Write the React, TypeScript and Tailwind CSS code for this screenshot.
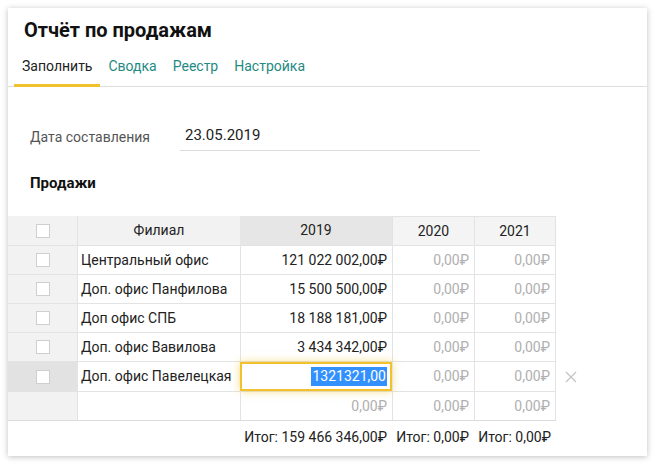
import React from 'react';

const rows = [
  { name: 'Центральный офис', v2019: '121 022 002,00₽' },
  { name: 'Доп. офис Панфилова', v2019: '15 500 500,00₽' },
  { name: 'Доп офис СПБ', v2019: '18 188 181,00₽' },
  { name: 'Доп. офис Вавилова', v2019: '3 434 342,00₽' },
];

const tabs = ['Заполнить', 'Сводка', 'Реестр', 'Настройка'];

const cols = 'grid grid-cols-[69px_163px_152px_82px_82px]';

const Checkbox = () => (
  <span className="block h-[14px] w-[14px] border border-[#cfcfcf] bg-white" />
);

const Zero = ({ last }: { last?: boolean }) => (
  <div
    className={`flex items-center justify-end border-l border-[#e3e3e3] pr-[5px] text-[#b0b0b0] ${
      last ? 'border-r' : ''
    }`}
  >
    0,00₽
  </div>
);

export default function App() {
  return (
    <div className="h-[468px] w-[656px] bg-white pt-2 pl-2 font-['Roboto',sans-serif]">
      <div className="h-[448px] w-[639px] bg-white shadow-[0_1px_6px_rgba(0,0,0,0.25)]">
        <div className="px-4 pt-[10px]">
          <h1 className="text-[20px] leading-6 font-bold text-[#111]">Отчёт по продажам</h1>
        </div>

        <div className="mt-[10px] flex border-b border-[#dedede] px-[6px]">
          {tabs.map((t, i) => (
            <div
              key={t}
              className={`-mb-px border-b-[3px] px-2 pt-[4px] pb-[8px] text-[14px] leading-5 ${
                i === 0 ? 'border-[#f2c12e] text-[#222]' : 'border-transparent text-[#1f8a83]'
              }`}
            >
              {t}
            </div>
          ))}
        </div>

        <div className="mt-[37px] flex items-center pl-[22px]">
          <span className="w-[150px] text-[14px] text-[#555]">Дата составления</span>
          <div className="w-[300px] border-b border-[#dcdcdc] pb-[3px] pl-[5px] text-[15px] text-[#222]">
            23.05.2019
          </div>
        </div>

        <div className="mt-[21px] pl-[22px] text-[15px] font-bold text-[#111]">Продажи</div>

        <div className="mt-[22px] flex items-start">
          <div className="w-[548px] text-[14px] text-[#222]">
            <div className={`${cols} h-[30px] border-b border-[#e3e3e3]`}>
              <div className="flex items-center justify-center bg-[#f2f2f2]">
                <Checkbox />
              </div>
              <div className="flex items-center justify-center border-l border-[#e3e3e3] bg-[#f2f2f2]">Филиал</div>
              <div className="flex items-center justify-center bg-[#e6e6e6]">2019</div>
              <div className="flex items-center justify-center border-t border-l border-[#e3e3e3] bg-[#f4f4f4]">2020</div>
              <div className="flex items-center justify-center border-t border-r border-l border-[#e3e3e3] bg-[#f4f4f4]">2021</div>
            </div>

            {rows.map((r) => (
              <div key={r.name} className={`${cols} h-[29px] border-b border-[#e3e3e3]`}>
                <div className="flex items-center justify-center bg-[#f2f2f2]">
                  <Checkbox />
                </div>
                <div className="flex items-center border-l border-[#e3e3e3] pl-[3px]">{r.name}</div>
                <div className="flex items-center justify-end border-l border-[#e3e3e3] pr-[5px]">{r.v2019}</div>
                <Zero />
                <Zero last />
              </div>
            ))}

            <div className={`${cols} h-[30px] border-b border-[#e3e3e3]`}>
              <div className="flex items-center justify-center bg-[#e2e2e2]">
                <Checkbox />
              </div>
              <div className="flex items-center border-l border-[#e3e3e3] pl-[3px]">Доп. офис Павелецкая</div>
              <div className="flex items-center justify-end border-2 border-[#f2c12e] pr-[3px] shadow-[0_0_8px_rgba(242,193,46,0.6)]">
                <span className="bg-[#3390ff] px-px leading-[19px] text-white">1321321,00</span>
              </div>
              <Zero />
              <Zero last />
            </div>

            <div className={`${cols} h-[29px] border-b border-[#dcdcdc]`}>
              <div className="bg-[#f2f2f2]" />
              <div className="border-l border-[#e3e3e3]" />
              <Zero />
              <Zero />
              <Zero last />
            </div>

            <div className={`${cols} h-[32px]`}>
              <div />
              <div />
              <div className="flex items-center justify-end pr-[5px]">Итог: 159 466 346,00₽</div>
              <div className="flex items-center justify-end pr-[5px]">Итог: 0,00₽</div>
              <div className="flex items-center justify-end pr-[5px]">Итог: 0,00₽</div>
            </div>
          </div>

          <div className="mt-[146px] ml-[9px] flex h-[30px] items-center">
            <svg width="12" height="12" viewBox="0 0 12 12" stroke="#c4c4c4" strokeWidth="1.3" fill="none">
              <path d="M1 1L11 11M11 1L1 11" />
            </svg>
          </div>
        </div>
      </div>
    </div>
  );
}
